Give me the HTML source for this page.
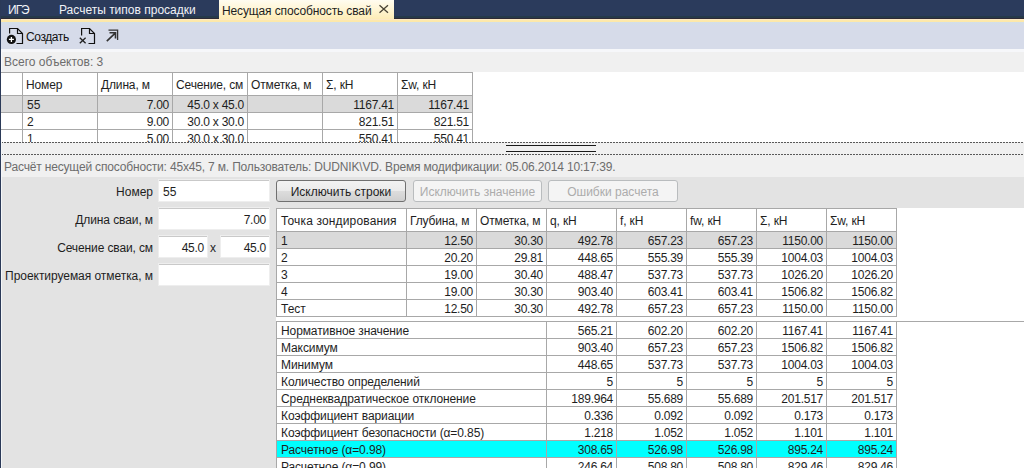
<!DOCTYPE html>
<html><head><meta charset="utf-8"><style>
*{margin:0;padding:0;box-sizing:border-box}
html,body{width:1024px;height:468px;overflow:hidden;background:#f0f0f0;font-family:"Liberation Sans",sans-serif;font-size:12px;color:#1e1e1e}
.c{letter-spacing:-0.1px}
.a{position:absolute}
.t{position:absolute;white-space:nowrap}
.r{text-align:right;letter-spacing:-0.25px}
.gl{position:absolute;background:#a0a0a0}
</style></head><body>
<div class="a" style="left:0px;top:0px;width:1024px;height:19px;background:#2b3b5c"></div>
<div class="a" style="left:0px;top:16px;width:1024px;height:2px;background:#26394a"></div>
<div class="a" style="left:0px;top:18px;width:1024px;height:1px;background:#2e2a35"></div>
<div class="t" style="left:8px;top:3px;line-height:14px;color:#f0f2f6;letter-spacing:-1px">ИГЭ</div>
<div class="t" style="left:59px;top:3px;line-height:14px;color:#f0f2f6">Расчеты типов просадки</div>
<div class="a" style="left:219px;top:0px;width:175px;height:22px;background:linear-gradient(#fffcf0,#fff3cc 55%,#fde9ad)"></div>
<div class="t" style="left:222px;top:4px;line-height:14px;color:#1e1e1e;letter-spacing:-0.13px">Несущая способность свай</div>
<svg class="a" style="left:378px;top:4px" width="11" height="11" viewBox="0 0 11 11"><path d="M1.5 1.2L10 8.8M10 1.2L1.5 8.8" stroke="#4a4436" stroke-width="1.3"/></svg>
<div class="a" style="left:0px;top:19px;width:1024px;height:3px;background:linear-gradient(#fde9d6,#fde8ac 40%,#fde8a8)"></div>
<div class="a" style="left:0px;top:22px;width:1024px;height:27px;background:linear-gradient(#d3dfe8,#d6dbe9 4px,#d6dbe9)"></div>
<div class="a" style="left:0px;top:49px;width:1024px;height:3px;background:#f6f7fa"></div>
<svg class="a" style="left:0;top:22px" width="130" height="27" viewBox="0 0 130 27">
<g fill="none" stroke="#111" stroke-width="1.2">
<path d="M9.6 11.5V6.5H17.5L22.5 11.5V21.5H16.5"/>
<path d="M17.5 6.5V11.5H22.5" />
</g>
<circle cx="11.4" cy="17.4" r="4.6" fill="#111"/>
<path d="M11.4 14.9V19.9M8.9 17.4H13.9" stroke="#fff" stroke-width="1.3"/>
<g fill="none" stroke="#111" stroke-width="1.2">
<path d="M81.6 13.5V6.5H89.5L94.5 11.5V21.5H88.5"/>
<path d="M89.5 6.5V11.5H94.5"/>
</g>
<path d="M79.8 15.8L85.6 21.3M85.6 15.8L79.8 21.3" stroke="#222" stroke-width="1.3"/>
<g fill="none" stroke="#333" stroke-width="1.3">
<path d="M108.5 8.2H117.6V18"/>
<path d="M106.8 19.2L115.5 10.8M109.5 10.8H115.5V16.5" stroke-width="1.6"/>
</g>
</svg>
<div class="t" style="left:26px;top:27px;line-height:20px;color:#111;letter-spacing:-0.4px">Создать</div>
<div class="t" style="left:4px;top:54px;line-height:16px;color:#6d6d6d">Всего объектов: 3</div>
<div class="a" style="left:0px;top:72px;width:1024px;height:70px;background:#fff"></div>
<div class="a" style="left:0px;top:95px;width:472px;height:17px;background:#dadada"></div>
<div class="a" style="left:0px;top:72px;width:472px;height:1px;background:#a8a8a8"></div>
<div class="a" style="left:0px;top:95px;width:472px;height:1px;background:#a8a8a8"></div>
<div class="a" style="left:0px;top:112px;width:472px;height:1px;background:#a8a8a8"></div>
<div class="a" style="left:0px;top:129px;width:472px;height:1px;background:#a8a8a8"></div>
<div class="a" style="left:0px;top:146px;width:472px;height:1px;background:#a8a8a8"></div>
<div class="a" style="left:22px;top:72px;width:1px;height:70px;background:#a8a8a8"></div>
<div class="a" style="left:97px;top:72px;width:1px;height:70px;background:#a8a8a8"></div>
<div class="a" style="left:172px;top:72px;width:1px;height:70px;background:#a8a8a8"></div>
<div class="a" style="left:247px;top:72px;width:1px;height:70px;background:#a8a8a8"></div>
<div class="a" style="left:322px;top:72px;width:1px;height:70px;background:#a8a8a8"></div>
<div class="a" style="left:397px;top:72px;width:1px;height:70px;background:#a8a8a8"></div>
<div class="a" style="left:472px;top:72px;width:1px;height:70px;background:#a8a8a8"></div>
<div class="t" style="left:26px;top:77px;line-height:16px;letter-spacing:-0.15px">Номер</div>
<div class="t" style="left:101px;top:77px;line-height:16px;letter-spacing:-0.15px">Длина, м</div>
<div class="t" style="left:176px;top:77px;line-height:16px;letter-spacing:-0.15px">Сечение, см</div>
<div class="t" style="left:251px;top:77px;line-height:16px;letter-spacing:-0.15px">Отметка, м</div>
<div class="t" style="left:326px;top:77px;line-height:16px;letter-spacing:-0.15px">Σ, кН</div>
<div class="t" style="left:401px;top:77px;line-height:16px;letter-spacing:-0.15px">Σw, кН</div>
<div class="t" style="left:27px;top:97px;line-height:16px;">55</div>
<div class="t r" style="left:99px;top:97px;width:70px;line-height:16px;">7.00</div>
<div class="t r" style="left:174px;top:97px;width:70px;line-height:16px;">45.0 x 45.0</div>
<div class="t r" style="left:324px;top:97px;width:70px;line-height:16px;">1167.41</div>
<div class="t r" style="left:399px;top:97px;width:70px;line-height:16px;">1167.41</div>
<div class="t" style="left:27px;top:114px;line-height:16px;">2</div>
<div class="t r" style="left:99px;top:114px;width:70px;line-height:16px;">9.00</div>
<div class="t r" style="left:174px;top:114px;width:70px;line-height:16px;">30.0 x 30.0</div>
<div class="t r" style="left:324px;top:114px;width:70px;line-height:16px;">821.51</div>
<div class="t r" style="left:399px;top:114px;width:70px;line-height:16px;">821.51</div>
<div class="t" style="left:27px;top:131px;line-height:16px;">1</div>
<div class="t r" style="left:99px;top:131px;width:70px;line-height:16px;">5.00</div>
<div class="t r" style="left:174px;top:131px;width:70px;line-height:16px;">30.0 x 30.0</div>
<div class="t r" style="left:324px;top:131px;width:70px;line-height:16px;">550.41</div>
<div class="t r" style="left:399px;top:131px;width:70px;line-height:16px;">550.41</div>
<div class="a" style="left:0px;top:142px;width:1024px;height:13px;background:#f0f0f0"></div>
<div class="a" style="left:1px;top:142px;width:1023px;height:1px;background:repeating-linear-gradient(90deg,#5a5a5a 0 2px,transparent 2px 3px)"></div>
<div class="a" style="left:1px;top:154px;width:1023px;height:1px;background:repeating-linear-gradient(90deg,#5a5a5a 0 2px,transparent 2px 3px)"></div>
<div class="a" style="left:506px;top:145px;width:90px;height:1px;background:#1a1a1a"></div>
<div class="a" style="left:506px;top:151px;width:90px;height:1px;background:#1a1a1a"></div>
<div class="t" style="left:4px;top:159px;line-height:16px;color:#6d6d6d;letter-spacing:-0.17px">Расчёт несущей способности: 45x45, 7 м. Пользователь: DUDNIK\VD. Время модификации: 05.06.2014 10:17:39.</div>
<div class="a" style="left:0px;top:177px;width:1024px;height:291px;background:#e3e3e3"></div>
<div class="a" style="left:276px;top:208px;width:748px;height:260px;background:#fff"></div>
<div class="a" style="left:159px;top:180px;width:110px;height:21px;background:#fff;border-top:1px solid #c9c9c9;box-shadow:0 0 0 1px #eeeeee"></div>
<div class="t r" style="left:-147px;top:184px;width:300px;line-height:16px;letter-spacing:0">Номер</div>
<div class="t" style="left:163px;top:184px;line-height:16px;">55</div>
<div class="a" style="left:159px;top:208px;width:110px;height:21px;background:#fff;border-top:1px solid #c9c9c9;box-shadow:0 0 0 1px #eeeeee"></div>
<div class="t r" style="left:-147px;top:212px;width:300px;line-height:16px;letter-spacing:-0.1px">Длина сваи, м</div>
<div class="t r" style="left:206px;top:212px;width:60px;line-height:16px;">7.00</div>
<div class="a" style="left:159px;top:236px;width:48px;height:21px;background:#fff;border-top:1px solid #c9c9c9;box-shadow:0 0 0 1px #eeeeee"></div>
<div class="t r" style="left:-147px;top:240px;width:300px;line-height:16px;letter-spacing:-0.12px">Сечение сваи, см</div>
<div class="t r" style="left:159px;top:240px;width:45px;line-height:16px;">45.0</div>
<div class="t" style="left:210px;top:240px;line-height:16px;">x</div>
<div class="a" style="left:221px;top:236px;width:48px;height:21px;background:#fff;border-top:1px solid #c9c9c9;box-shadow:0 0 0 1px #eeeeee"></div>
<div class="t r" style="left:221px;top:240px;width:45px;line-height:16px;">45.0</div>
<div class="a" style="left:159px;top:264px;width:110px;height:21px;background:#fff;border-top:1px solid #c9c9c9;box-shadow:0 0 0 1px #eeeeee"></div>
<div class="t r" style="left:-147px;top:268px;width:300px;line-height:16px;letter-spacing:-0.05px">Проектируемая отметка, м</div>
<div class="a" style="left:276px;top:180px;width:130px;height:22px;border:1px solid #707070;border-radius:3px;background:linear-gradient(#f2f2f2,#ebebeb 50%,#dddddd 50%,#cfcfcf)"></div>
<div class="t" style="left:276px;top:184px;line-height:16px;"><div style="width:130px;text-align:center">Исключить строки</div></div>
<div class="a" style="left:413px;top:180px;width:129px;height:22px;border:1px solid #b9bcbe;border-radius:3px;background:#f4f4f4"></div>
<div class="t" style="left:413px;top:184px;line-height:16px;color:#acacac"><div style="width:129px;text-align:center">Исключить значение</div></div>
<div class="a" style="left:548px;top:180px;width:130px;height:22px;border:1px solid #b9bcbe;border-radius:3px;background:#f4f4f4"></div>
<div class="t" style="left:548px;top:184px;line-height:16px;color:#acacac"><div style="width:130px;text-align:center">Ошибки расчета</div></div>
<div class="a" style="left:276px;top:231px;width:620px;height:17px;background:#dadada"></div>
<div class="a" style="left:276px;top:208px;width:621px;height:1px;background:#a8a8a8"></div>
<div class="a" style="left:276px;top:231px;width:621px;height:1px;background:#a8a8a8"></div>
<div class="a" style="left:276px;top:248px;width:621px;height:1px;background:#a8a8a8"></div>
<div class="a" style="left:276px;top:265px;width:621px;height:1px;background:#a8a8a8"></div>
<div class="a" style="left:276px;top:282px;width:621px;height:1px;background:#a8a8a8"></div>
<div class="a" style="left:276px;top:299px;width:621px;height:1px;background:#a8a8a8"></div>
<div class="a" style="left:276px;top:316px;width:621px;height:1px;background:#a8a8a8"></div>
<div class="a" style="left:276px;top:208px;width:1px;height:108px;background:#a8a8a8"></div>
<div class="a" style="left:406px;top:208px;width:1px;height:108px;background:#a8a8a8"></div>
<div class="a" style="left:476px;top:208px;width:1px;height:108px;background:#a8a8a8"></div>
<div class="a" style="left:546px;top:208px;width:1px;height:108px;background:#a8a8a8"></div>
<div class="a" style="left:616px;top:208px;width:1px;height:108px;background:#a8a8a8"></div>
<div class="a" style="left:686px;top:208px;width:1px;height:108px;background:#a8a8a8"></div>
<div class="a" style="left:756px;top:208px;width:1px;height:108px;background:#a8a8a8"></div>
<div class="a" style="left:826px;top:208px;width:1px;height:108px;background:#a8a8a8"></div>
<div class="a" style="left:896px;top:208px;width:1px;height:108px;background:#a8a8a8"></div>
<div class="t" style="left:281px;top:213px;line-height:16px;letter-spacing:0.15px">Точка зондирования</div>
<div class="t" style="left:410px;top:213px;line-height:16px;letter-spacing:-0.15px">Глубина, м</div>
<div class="t" style="left:480px;top:213px;line-height:16px;letter-spacing:-0.15px">Отметка, м</div>
<div class="t" style="left:550px;top:213px;line-height:16px;letter-spacing:-0.15px">q, кН</div>
<div class="t" style="left:620px;top:213px;line-height:16px;letter-spacing:-0.15px">f, кН</div>
<div class="t" style="left:690px;top:213px;line-height:16px;letter-spacing:-0.15px">fw, кН</div>
<div class="t" style="left:760px;top:213px;line-height:16px;letter-spacing:-0.15px">Σ, кН</div>
<div class="t" style="left:830px;top:213px;line-height:16px;letter-spacing:-0.15px">Σw, кН</div>
<div class="t" style="left:281px;top:233px;line-height:16px;">1</div>
<div class="t r" style="left:403px;top:233px;width:70px;line-height:16px;">12.50</div>
<div class="t r" style="left:473px;top:233px;width:70px;line-height:16px;">30.30</div>
<div class="t r" style="left:543px;top:233px;width:70px;line-height:16px;">492.78</div>
<div class="t r" style="left:613px;top:233px;width:70px;line-height:16px;">657.23</div>
<div class="t r" style="left:683px;top:233px;width:70px;line-height:16px;">657.23</div>
<div class="t r" style="left:753px;top:233px;width:70px;line-height:16px;">1150.00</div>
<div class="t r" style="left:823px;top:233px;width:70px;line-height:16px;">1150.00</div>
<div class="t" style="left:281px;top:250px;line-height:16px;">2</div>
<div class="t r" style="left:403px;top:250px;width:70px;line-height:16px;">20.20</div>
<div class="t r" style="left:473px;top:250px;width:70px;line-height:16px;">29.81</div>
<div class="t r" style="left:543px;top:250px;width:70px;line-height:16px;">448.65</div>
<div class="t r" style="left:613px;top:250px;width:70px;line-height:16px;">555.39</div>
<div class="t r" style="left:683px;top:250px;width:70px;line-height:16px;">555.39</div>
<div class="t r" style="left:753px;top:250px;width:70px;line-height:16px;">1004.03</div>
<div class="t r" style="left:823px;top:250px;width:70px;line-height:16px;">1004.03</div>
<div class="t" style="left:281px;top:267px;line-height:16px;">3</div>
<div class="t r" style="left:403px;top:267px;width:70px;line-height:16px;">19.00</div>
<div class="t r" style="left:473px;top:267px;width:70px;line-height:16px;">30.40</div>
<div class="t r" style="left:543px;top:267px;width:70px;line-height:16px;">488.47</div>
<div class="t r" style="left:613px;top:267px;width:70px;line-height:16px;">537.73</div>
<div class="t r" style="left:683px;top:267px;width:70px;line-height:16px;">537.73</div>
<div class="t r" style="left:753px;top:267px;width:70px;line-height:16px;">1026.20</div>
<div class="t r" style="left:823px;top:267px;width:70px;line-height:16px;">1026.20</div>
<div class="t" style="left:281px;top:284px;line-height:16px;">4</div>
<div class="t r" style="left:403px;top:284px;width:70px;line-height:16px;">19.00</div>
<div class="t r" style="left:473px;top:284px;width:70px;line-height:16px;">30.30</div>
<div class="t r" style="left:543px;top:284px;width:70px;line-height:16px;">903.40</div>
<div class="t r" style="left:613px;top:284px;width:70px;line-height:16px;">603.41</div>
<div class="t r" style="left:683px;top:284px;width:70px;line-height:16px;">603.41</div>
<div class="t r" style="left:753px;top:284px;width:70px;line-height:16px;">1506.82</div>
<div class="t r" style="left:823px;top:284px;width:70px;line-height:16px;">1506.82</div>
<div class="t" style="left:281px;top:301px;line-height:16px;">Тест</div>
<div class="t r" style="left:403px;top:301px;width:70px;line-height:16px;">12.50</div>
<div class="t r" style="left:473px;top:301px;width:70px;line-height:16px;">30.30</div>
<div class="t r" style="left:543px;top:301px;width:70px;line-height:16px;">492.78</div>
<div class="t r" style="left:613px;top:301px;width:70px;line-height:16px;">657.23</div>
<div class="t r" style="left:683px;top:301px;width:70px;line-height:16px;">657.23</div>
<div class="t r" style="left:753px;top:301px;width:70px;line-height:16px;">1150.00</div>
<div class="t r" style="left:823px;top:301px;width:70px;line-height:16px;">1150.00</div>
<div class="a" style="left:276px;top:440px;width:620px;height:17px;background:#00ffff"></div>
<div class="a" style="left:276px;top:321px;width:748px;height:1px;background:#a8a8a8"></div>
<div class="a" style="left:276px;top:338px;width:621px;height:1px;background:#a8a8a8"></div>
<div class="a" style="left:276px;top:355px;width:621px;height:1px;background:#a8a8a8"></div>
<div class="a" style="left:276px;top:372px;width:621px;height:1px;background:#a8a8a8"></div>
<div class="a" style="left:276px;top:389px;width:621px;height:1px;background:#a8a8a8"></div>
<div class="a" style="left:276px;top:406px;width:621px;height:1px;background:#a8a8a8"></div>
<div class="a" style="left:276px;top:423px;width:621px;height:1px;background:#a8a8a8"></div>
<div class="a" style="left:276px;top:440px;width:621px;height:1px;background:#a8a8a8"></div>
<div class="a" style="left:276px;top:457px;width:621px;height:1px;background:#a8a8a8"></div>
<div class="a" style="left:276px;top:474px;width:621px;height:1px;background:#a8a8a8"></div>
<div class="a" style="left:276px;top:321px;width:1px;height:147px;background:#a8a8a8"></div>
<div class="a" style="left:546px;top:321px;width:1px;height:147px;background:#a8a8a8"></div>
<div class="a" style="left:616px;top:321px;width:1px;height:147px;background:#a8a8a8"></div>
<div class="a" style="left:686px;top:321px;width:1px;height:147px;background:#a8a8a8"></div>
<div class="a" style="left:756px;top:321px;width:1px;height:147px;background:#a8a8a8"></div>
<div class="a" style="left:826px;top:321px;width:1px;height:147px;background:#a8a8a8"></div>
<div class="a" style="left:896px;top:321px;width:1px;height:147px;background:#a8a8a8"></div>
<div class="t" style="left:281px;top:323px;line-height:16px;letter-spacing:-0.1px">Нормативное значение</div>
<div class="t r" style="left:543px;top:323px;width:70px;line-height:16px;">565.21</div>
<div class="t r" style="left:613px;top:323px;width:70px;line-height:16px;">602.20</div>
<div class="t r" style="left:683px;top:323px;width:70px;line-height:16px;">602.20</div>
<div class="t r" style="left:753px;top:323px;width:70px;line-height:16px;">1167.41</div>
<div class="t r" style="left:823px;top:323px;width:70px;line-height:16px;">1167.41</div>
<div class="t" style="left:281px;top:340px;line-height:16px;letter-spacing:-0.1px">Максимум</div>
<div class="t r" style="left:543px;top:340px;width:70px;line-height:16px;">903.40</div>
<div class="t r" style="left:613px;top:340px;width:70px;line-height:16px;">657.23</div>
<div class="t r" style="left:683px;top:340px;width:70px;line-height:16px;">657.23</div>
<div class="t r" style="left:753px;top:340px;width:70px;line-height:16px;">1506.82</div>
<div class="t r" style="left:823px;top:340px;width:70px;line-height:16px;">1506.82</div>
<div class="t" style="left:281px;top:357px;line-height:16px;letter-spacing:-0.1px">Минимум</div>
<div class="t r" style="left:543px;top:357px;width:70px;line-height:16px;">448.65</div>
<div class="t r" style="left:613px;top:357px;width:70px;line-height:16px;">537.73</div>
<div class="t r" style="left:683px;top:357px;width:70px;line-height:16px;">537.73</div>
<div class="t r" style="left:753px;top:357px;width:70px;line-height:16px;">1004.03</div>
<div class="t r" style="left:823px;top:357px;width:70px;line-height:16px;">1004.03</div>
<div class="t" style="left:281px;top:374px;line-height:16px;letter-spacing:-0.1px">Количество определений</div>
<div class="t r" style="left:543px;top:374px;width:70px;line-height:16px;">5</div>
<div class="t r" style="left:613px;top:374px;width:70px;line-height:16px;">5</div>
<div class="t r" style="left:683px;top:374px;width:70px;line-height:16px;">5</div>
<div class="t r" style="left:753px;top:374px;width:70px;line-height:16px;">5</div>
<div class="t r" style="left:823px;top:374px;width:70px;line-height:16px;">5</div>
<div class="t" style="left:281px;top:391px;line-height:16px;letter-spacing:-0.1px">Среднеквадратическое отклонение</div>
<div class="t r" style="left:543px;top:391px;width:70px;line-height:16px;">189.964</div>
<div class="t r" style="left:613px;top:391px;width:70px;line-height:16px;">55.689</div>
<div class="t r" style="left:683px;top:391px;width:70px;line-height:16px;">55.689</div>
<div class="t r" style="left:753px;top:391px;width:70px;line-height:16px;">201.517</div>
<div class="t r" style="left:823px;top:391px;width:70px;line-height:16px;">201.517</div>
<div class="t" style="left:281px;top:408px;line-height:16px;letter-spacing:-0.1px">Коэффициент вариации</div>
<div class="t r" style="left:543px;top:408px;width:70px;line-height:16px;">0.336</div>
<div class="t r" style="left:613px;top:408px;width:70px;line-height:16px;">0.092</div>
<div class="t r" style="left:683px;top:408px;width:70px;line-height:16px;">0.092</div>
<div class="t r" style="left:753px;top:408px;width:70px;line-height:16px;">0.173</div>
<div class="t r" style="left:823px;top:408px;width:70px;line-height:16px;">0.173</div>
<div class="t" style="left:281px;top:425px;line-height:16px;letter-spacing:-0.1px">Коэффициент безопасности (α=0.85)</div>
<div class="t r" style="left:543px;top:425px;width:70px;line-height:16px;">1.218</div>
<div class="t r" style="left:613px;top:425px;width:70px;line-height:16px;">1.052</div>
<div class="t r" style="left:683px;top:425px;width:70px;line-height:16px;">1.052</div>
<div class="t r" style="left:753px;top:425px;width:70px;line-height:16px;">1.101</div>
<div class="t r" style="left:823px;top:425px;width:70px;line-height:16px;">1.101</div>
<div class="t" style="left:281px;top:442px;line-height:16px;letter-spacing:-0.1px">Расчетное (α=0.98)</div>
<div class="t r" style="left:543px;top:442px;width:70px;line-height:16px;">308.65</div>
<div class="t r" style="left:613px;top:442px;width:70px;line-height:16px;">526.98</div>
<div class="t r" style="left:683px;top:442px;width:70px;line-height:16px;">526.98</div>
<div class="t r" style="left:753px;top:442px;width:70px;line-height:16px;">895.24</div>
<div class="t r" style="left:823px;top:442px;width:70px;line-height:16px;">895.24</div>
<div class="t" style="left:281px;top:459px;line-height:16px;letter-spacing:-0.1px">Расчетное (α=0.99)</div>
<div class="t r" style="left:543px;top:459px;width:70px;line-height:16px;">246.64</div>
<div class="t r" style="left:613px;top:459px;width:70px;line-height:16px;">508.80</div>
<div class="t r" style="left:683px;top:459px;width:70px;line-height:16px;">508.80</div>
<div class="t r" style="left:753px;top:459px;width:70px;line-height:16px;">829.46</div>
<div class="t r" style="left:823px;top:459px;width:70px;line-height:16px;">829.46</div>
<div class="a" style="left:0px;top:0px;width:1px;height:468px;background:#2b3a58"></div>
<div class="a" style="left:1px;top:49px;width:1px;height:23px;background:#f8f9fb"></div>
<div class="a" style="left:1px;top:142px;width:1px;height:326px;background:#f4f6f8"></div>
</body></html>
